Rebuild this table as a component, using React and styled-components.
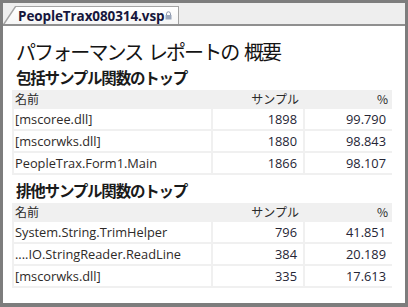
import React from "react";
import styled, { createGlobalStyle } from "styled-components";

const inclusive = [
  { name: "[mscoree.dll]", samples: 1898, pct: "99.790" },
  { name: "[mscorwks.dll]", samples: 1880, pct: "98.843" },
  { name: "PeopleTrax.Form1.Main", samples: 1866, pct: "98.107" },
];

const exclusive = [
  { name: "System.String.TrimHelper", samples: 796, pct: "41.851" },
  { name: "....IO.StringReader.ReadLine", samples: 384, pct: "20.189" },
  { name: "[mscorwks.dll]", samples: 335, pct: "17.613" },
];

const GlobalStyle = createGlobalStyle`
  html, body {
    margin: 0;
    padding: 0;
    background: #ffffff;
  }
`;

const Frame = styled.div`
  width: 408px;
  height: 307px;
  box-sizing: border-box;
  border: 3px solid #7d7d7d;
  border-bottom-width: 4px;
  background: #ffffff;
  display: flex;
  flex-direction: column;
  overflow: hidden;
`;

const TabStrip = styled.div`
  height: 21px;
  background: #eeeeee;
  border-bottom: 2px solid #8f8f8f;
  display: flex;
  align-items: flex-end;
  flex-shrink: 0;
`;

const Tab = styled.div`
  height: 18px;
  padding: 1px 1px 0 1px;
  box-sizing: border-box;
  background: #a3a3a3;
  clip-path: polygon(0 100%, 12px 0, 100% 0, 100% 100%);
`;

const TabFace = styled.div`
  height: 17px;
  box-sizing: border-box;
  padding: 0 6px 0 14px;
  background: linear-gradient(#ffffff, #f6f6f6);
  clip-path: polygon(0.8px 100%, 12.1px 0, 100% 0, 100% 100%);
  display: flex;
  align-items: center;
  gap: 1px;
  font-family: "Open Sans", "Liberation Sans", sans-serif;
  font-weight: 700;
  font-size: 13.5px;
  color: #16163c;
  letter-spacing: -0.1px;
`;

const Content = styled.div`
  padding: 12px 13px 0 9px;
  display: flex;
  flex-direction: column;
`;

const Title = styled.h1`
  margin: 0 0 0 4px;
  font-family: "Noto Sans CJK JP", sans-serif;
  font-weight: 400;
  font-size: 20px;
  line-height: 28px;
  letter-spacing: -1.9px;
  word-spacing: 3px;
  color: #141414;
`;

const Heading = styled.h2`
  margin: ${(p) => p.$top || 0}px 0 2px 4px;
  font-family: "Noto Sans CJK JP", sans-serif;
  font-weight: 700;
  font-size: 15.5px;
  line-height: 22px;
  letter-spacing: -1.2px;
  color: #1a1a1a;
`;

const Grid = styled.div`
  display: grid;
  grid-template-columns: 197px 90px 87px;
  gap: 2px;
  padding: 0 2px 2px 2px;
  background: #f0f0f0;
  font-family: "Open Sans", "Noto Sans CJK JP", sans-serif;
`;

const HeadCell = styled.div`
  height: 17px;
  line-height: 17px;
  font-family: "Noto Sans CJK JP", sans-serif;
  font-size: 12px;
  color: #2a2a2a;
  text-align: ${(p) => (p.$right ? "right" : "left")};
  padding: ${(p) => (p.$right ? "0 4px 0 0" : "0 0 0 1px")};
`;

const Cell = styled.div`
  height: 20px;
  line-height: 20px;
  background: #ffffff;
  font-size: 12.8px;
  color: ${(p) => (p.$right ? "#252535" : "#2e2a28")};
  text-align: ${(p) => (p.$right ? "right" : "left")};
  padding: ${(p) => (p.$right ? "0 6px 0 0" : "0 0 0 1px")};
  white-space: nowrap;
`;

function Lock() {
  return (
    <svg width="7" height="9" viewBox="0 0 7 9">
      <path d="M1.5 4V2.8a2 2 0 0 1 4 0V4" fill="none" stroke="#8a94a8" strokeWidth="1" />
      <rect x="0.5" y="4" width="6" height="4.5" fill="#9aa6bb" />
    </svg>
  );
}

function Table({ rows }) {
  return (
    <Grid>
      <HeadCell>名前</HeadCell>
      <HeadCell $right>サンプル</HeadCell>
      <HeadCell $right>%</HeadCell>
      {rows.map((r) => (
        <React.Fragment key={r.name + r.samples}>
          <Cell>{r.name}</Cell>
          <Cell $right>{r.samples}</Cell>
          <Cell $right>{r.pct}</Cell>
        </React.Fragment>
      ))}
    </Grid>
  );
}

export default function App() {
  return (
    <>
      <GlobalStyle />
      <Frame>
        <TabStrip>
          <Tab>
            <TabFace>
              PeopleTrax080314.vsp
              <Lock />
            </TabFace>
          </Tab>
        </TabStrip>
        <Content>
          <Title>パフォーマンス レポートの 概要</Title>
          <Heading>包括サンプル関数のトップ</Heading>
          <Table rows={inclusive} />
          <Heading $top={4}>排他サンプル関数のトップ</Heading>
          <Table rows={exclusive} />
        </Content>
      </Frame>
    </>
  );
}
